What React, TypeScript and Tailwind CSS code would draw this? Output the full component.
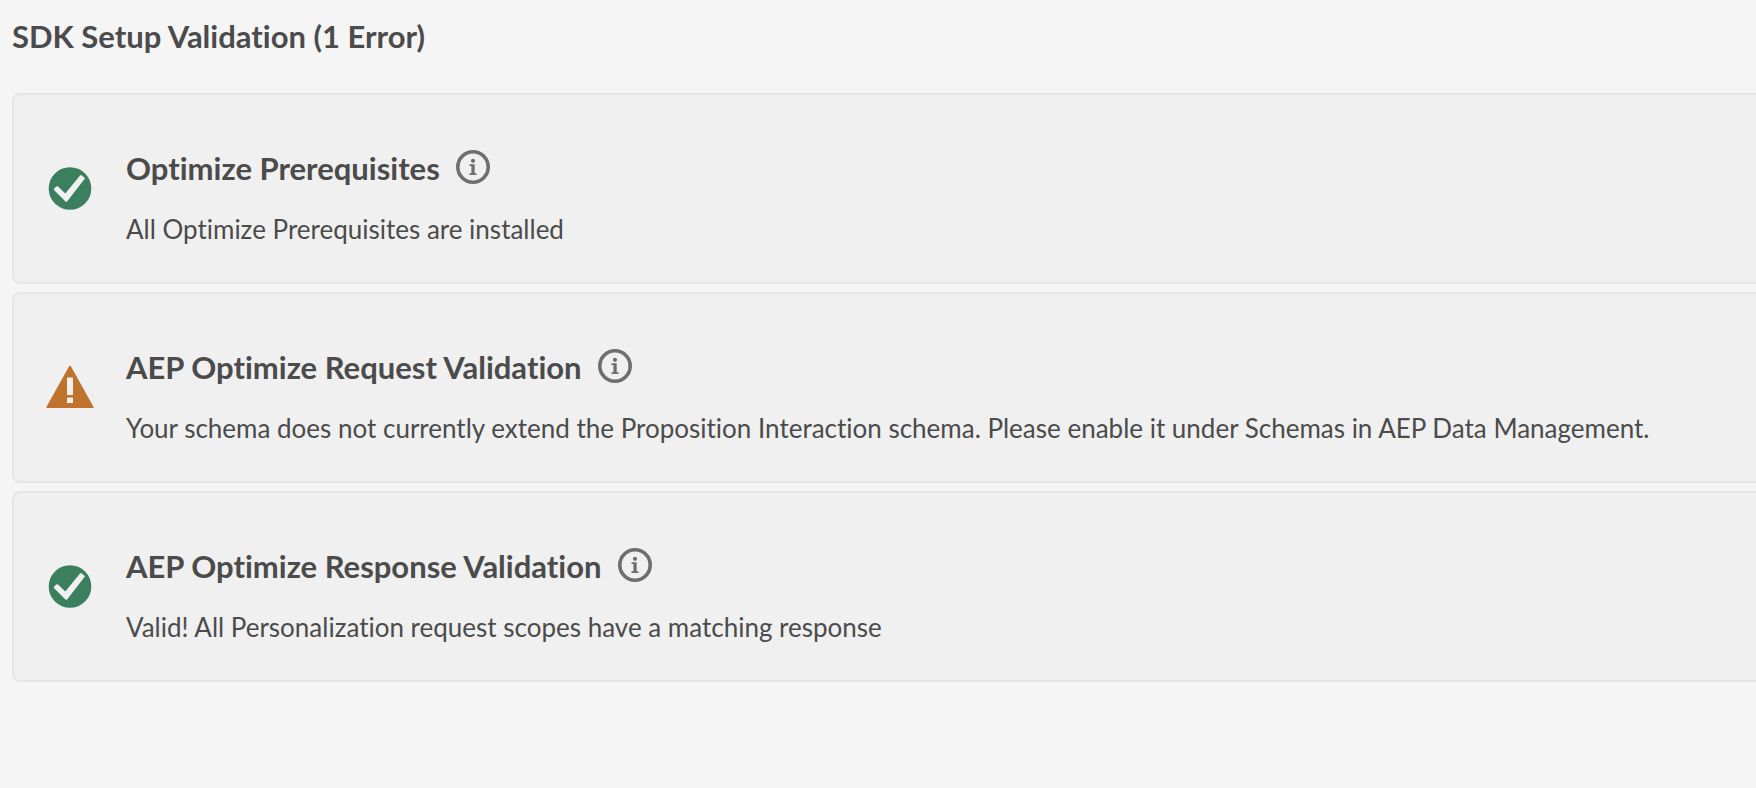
type Status = "success" | "warning";

interface Validation {
  title: string;
  message: string;
  status: Status;
}

const validations: Validation[] = [
  {
    title: "Optimize Prerequisites",
    message: "All Optimize Prerequisites are installed",
    status: "success",
  },
  {
    title: "AEP Optimize Request Validation",
    message:
      "Your schema does not currently extend the Proposition Interaction schema. Please enable it under Schemas in AEP Data Management.",
    status: "warning",
  },
  {
    title: "AEP Optimize Response Validation",
    message: "Valid! All Personalization request scopes have a matching response",
    status: "success",
  },
];

function StatusIcon({ status }: { status: Status }) {
  if (status === "warning") {
    return (
      <svg viewBox="0 0 48 48" className="size-12 shrink-0" role="img" aria-label="Warning">
        <path
          d="M23.1 2.2a1 1 0 0 1 1.8 0L47.6 43a.7.7 0 0 1-.6 1H1a.7.7 0 0 1-.6-1Z"
          fill="#c0732c"
        />
        <rect x="21" y="13.6" width="6" height="17.4" rx="0.6" fill="#f0f0f0" />
        <rect x="21" y="33.6" width="6" height="5.4" rx="0.6" fill="#f0f0f0" />
      </svg>
    );
  }
  return (
    <svg viewBox="0 0 48 48" className="size-12 shrink-0" role="img" aria-label="Passed">
      <circle cx="24" cy="23.5" r="21.3" fill="#3b7f5f" />
      <path
        d="M12 21.6 19.3 28.6 34 10.6a1.2 1.2 0 0 1 1.7-.2l2.6 2a1.2 1.2 0 0 1 .2 1.7L21.3 36.3a1.2 1.2 0 0 1-1.8.1L8.2 25.3a1.2 1.2 0 0 1 0-1.7l2.1-2a1.2 1.2 0 0 1 1.7 0Z"
        fill="#f0f0f0"
      />
    </svg>
  );
}

function InfoIcon() {
  return (
    <svg viewBox="0 0 34 34" className="size-[34px]" aria-hidden="true">
      <circle cx="17" cy="17" r="15.2" fill="none" stroke="#6e6e6e" strokeWidth="3.6" />
      <circle cx="17" cy="10.8" r="2.1" fill="#6e6e6e" />
      <path
        d="M14 14.3h4.7v8.9h1.3a.6.6 0 0 1 .6.6v.6a.6.6 0 0 1-.6.6h-6a.6.6 0 0 1-.6-.6v-.6a.6.6 0 0 1 .6-.6h1.4v-7.1H14a.6.6 0 0 1-.6-.6v-.6a.6.6 0 0 1 .6-.6Z"
        fill="#6e6e6e"
      />
    </svg>
  );
}

function ValidationCard({ title, message, status }: Validation) {
  return (
    <li className="flex items-center gap-8 rounded-l-lg border-y-2 border-l-2 border-[#e6e6e6] bg-[#f0f0f0] pl-8">
      <StatusIcon status={status} />
      <div className="pt-[51px] pb-[33px]">
        <div className="mb-5 flex items-start gap-4">
          <h2 className="text-[31px] leading-[44px] font-bold">{title}</h2>
          <button type="button" aria-label={`About ${title}`} className="mt-1">
            <InfoIcon />
          </button>
        </div>
        <p className="text-[26px] leading-[39px]">{message}</p>
      </div>
    </li>
  );
}

export default function App() {
  return (
    <main className="min-h-screen bg-[#f5f5f5] pt-3.5 pl-3 font-[Lato,sans-serif] text-[#4b4b4b] [font-variant-ligatures:none]">
      <h1 className="mb-[35px] text-[31px] leading-[44px] font-bold">SDK Setup Validation (1 Error)</h1>
      <ul className="flex flex-col gap-2">
        {validations.map((item) => (
          <ValidationCard key={item.title} {...item} />
        ))}
      </ul>
    </main>
  );
}
